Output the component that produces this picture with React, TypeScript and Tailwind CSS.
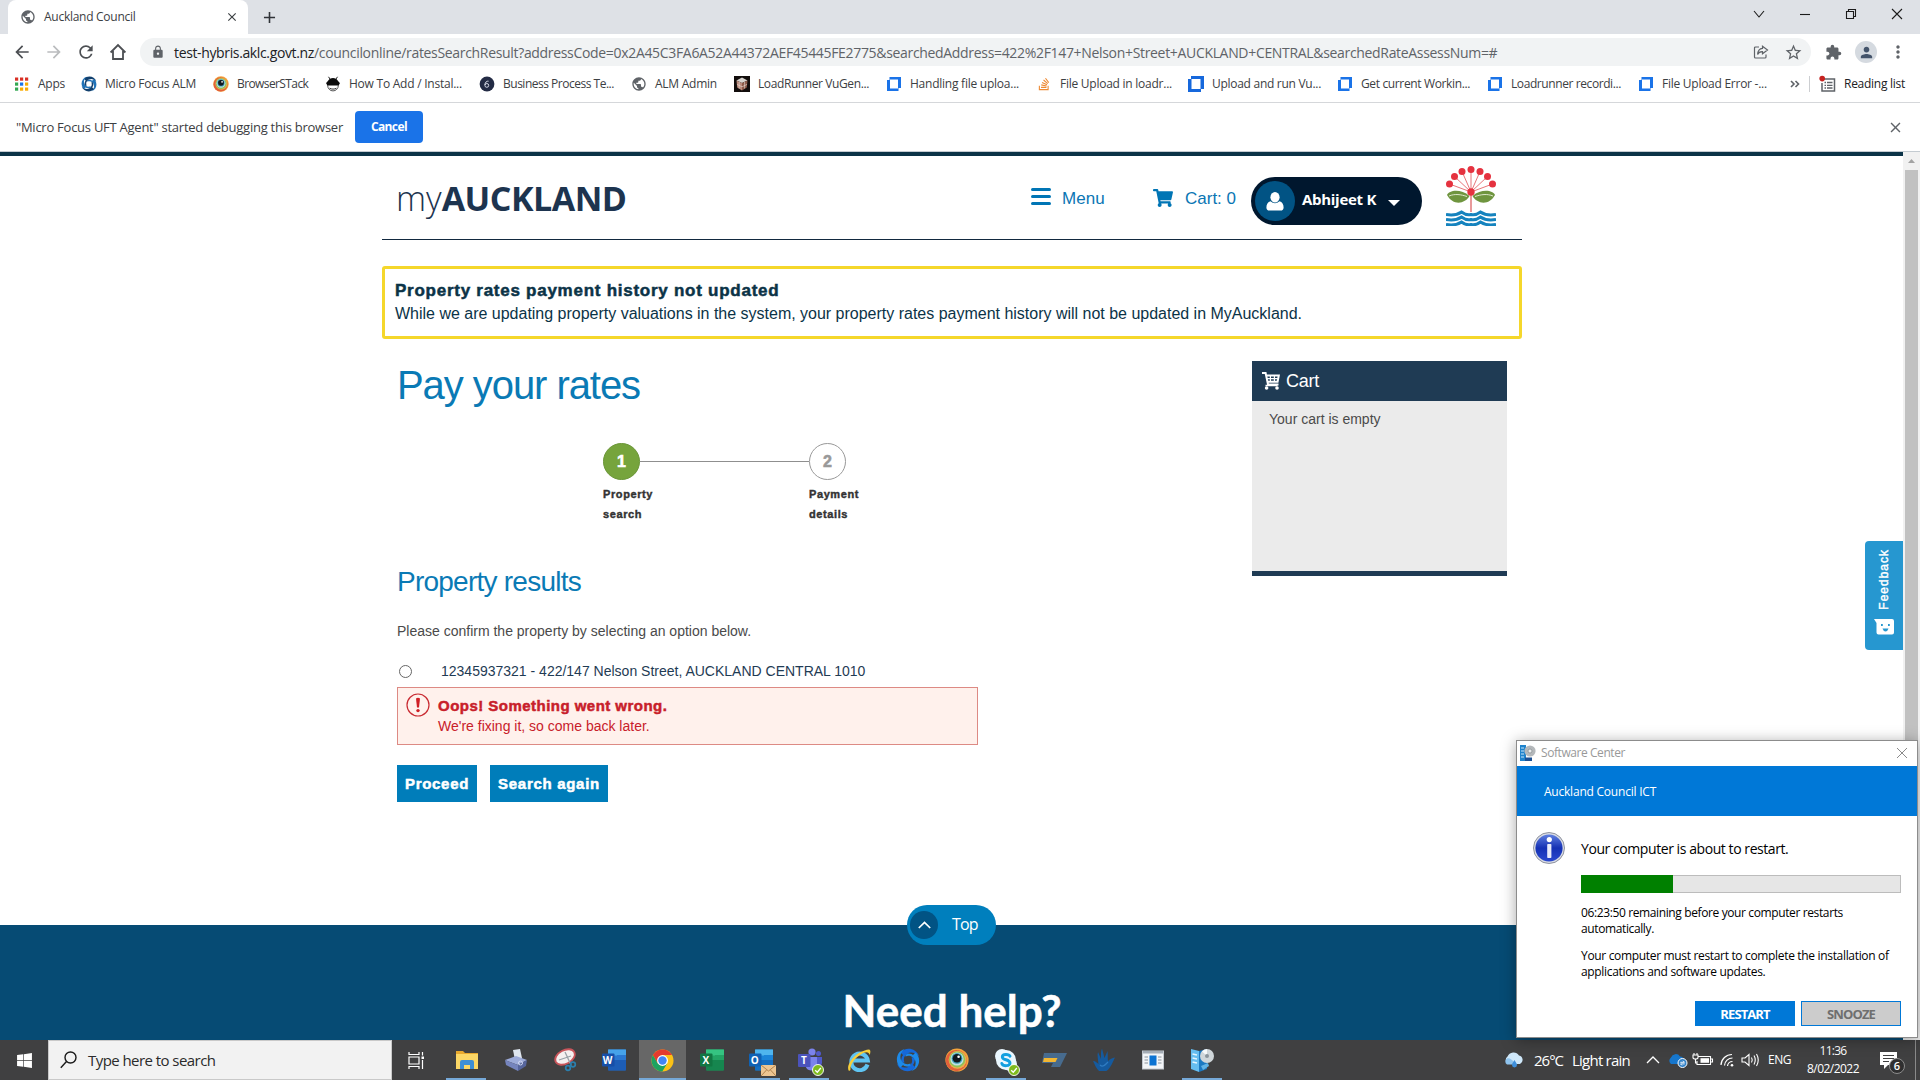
import type { ReactNode } from "react";
import {
  MdAdd,
  MdArrowBack,
  MdArrowForward,
  MdClose,
  MdExtension,
  MdLock,
  MdMoreVert,
  MdPerson,
  MdPublic,
  MdRefresh,
  MdStarBorder,
} from "react-icons/md";
import { FaShoppingCart, FaStackOverflow, FaWindows } from "react-icons/fa";

const SEGOE = "font-['Open_Sans',sans-serif]";
const ARIAL = "font-['Liberation_Sans',Arial,sans-serif]";

/* ---------- bookmark icons ---------- */

function AppsIcon() {
  const colors = ["#d93025", "#d93025", "#d93025", "#34a853", "#1a73e8", "#f9ab00", "#34a853", "#f9ab00", "#f9ab00"];
  return (
    <svg width="16" height="16" viewBox="0 0 16 16">
      {colors.map((c, i) => (
        <rect key={i} x={1 + (i % 3) * 5} y={1.5 + Math.floor(i / 3) * 5} width="3.2" height="3.2" fill={c} />
      ))}
    </svg>
  );
}

function Swirl({ size, color, inner }: { size: number; color: string; inner: string }) {
  return (
    <svg width={size} height={size} viewBox="0 0 24 24">
      {[0, 90, 180, 270].map((a, i) => (
        <g key={a} transform={`rotate(${a} 12 12)`}>
          <path d="M4.500 4.500C9.500 -1.500 20.500 0 23 8.500C19 3.200 11.500 3 8 8Z" fill={i % 2 ? inner : color} />
          <path d="M9.500 6.500C14.500 3.500 20 7.500 19 13.500C18 9.500 14.500 6.500 9.500 8.500Z" fill={i % 2 ? color : inner} />
        </g>
      ))}
    </svg>
  );
}

function BrowserStackIcon({ size }: { size: number }) {
  return (
    <svg width={size} height={size} viewBox="0 0 24 24">
      <circle cx="12" cy="12" r="11.6" fill="#f4a43c" />
      <circle cx="11.4" cy="12.6" r="10.6" fill="#e2603a" />
      <circle cx="12.6" cy="11.8" r="9" fill="#e9b04c" />
      <circle cx="12.2" cy="11.4" r="8" fill="#8fc25a" />
      <circle cx="12" cy="11" r="6.6" fill="#bfe0e4" />
      <circle cx="12" cy="10.4" r="5.4" fill="#3c9db8" />
      <circle cx="12" cy="10.2" r="4.3" fill="#10181f" />
      <circle cx="13.6" cy="8.8" r="1.3" fill="#fff" />
    </svg>
  );
}

function BugIcon() {
  return (
    <svg width="16" height="16" viewBox="0 0 16 16">
      <path d="M5 3L3.5 0.8M11 3L12.5 0.8" stroke="#222" strokeWidth="1" />
      <circle cx="8" cy="9.6" r="5.3" fill="#fff" stroke="#444" strokeWidth="0.9" />
      <path d="M1 7C3 6 3.4 2 8 2S13 6 15 7L13.6 9.6H2.4Z" fill="#0b0b0b" />
      <path d="M4.6 12.2C6.4 13.4 9.6 13.4 11.4 12.2" stroke="#333" fill="none" />
    </svg>
  );
}

function ProcessIcon() {
  return (
    <svg width="16" height="16" viewBox="0 0 16 16">
      <circle cx="8" cy="8" r="7.4" fill="#232b45" />
      <circle cx="7.8" cy="9.4" r="1.9" fill="none" stroke="#e4e8f4" strokeWidth="0.9" />
      <path d="M5.9 9C6 6.400 7.600 4.800 9.600 5.200" fill="none" stroke="#e4e8f4" strokeWidth="0.9" />
    </svg>
  );
}

function LoadRunnerIcon() {
  return (
    <svg width="16" height="16" viewBox="0 0 16 16">
      <rect width="16" height="16" fill="#120d0c" />
      <path d="M2.5 4.4L8 1.6L13.5 4.4L8 7Z" fill="#d7d3ce" />
      <path d="M2.5 4.4L8 7V14.6L3.2 11.6Z" fill="#b9897a" />
      <path d="M13.5 4.4L8 7V14.6L12.8 11.6Z" fill="#8d5a49" />
      <path d="M5.2 6V12.6M10.6 6V12.6M3 8.4L8 10.8L13 8.4" stroke="#eadfd8" strokeWidth="0.6" fill="none" />
    </svg>
  );
}

function CommunityIcon({ bold = false }: { bold?: boolean }) {
  return (
    <svg width="16" height="16" viewBox="0 0 16 16">
      {bold ? (
        <path d="M3 0H16V13H13V16H0V3H3ZM3.500 3V13H12.500V3Z" fill="#1668dc" fillRule="evenodd" />
      ) : (
        <path d="M3.500 1H15V12H12.500V15H1V4H3.500ZM4 3.500V12.500H12V3.500Z" fill="#1a73e8" fillRule="evenodd" />
      )}
    </svg>
  );
}

type Bookmark = { label: string; icon: ReactNode; width: string; tracking: string };

const bookmarks: Bookmark[] = [
  { label: "Apps", icon: <AppsIcon />, width: "w-[67px]", tracking: "tracking-[-0.25px]" },
  { label: "Micro Focus ALM", icon: <Swirl size={16} color="#12406e" inner="#1f72b8" />, width: "w-[132px]", tracking: "tracking-[-0.25px]" },
  { label: "BrowserSTack", icon: <BrowserStackIcon size={16} />, width: "w-[112px]", tracking: "tracking-[-0.6px]" },
  { label: "How To Add / Instal...", icon: <BugIcon />, width: "w-[154px]", tracking: "tracking-[-0.24px]" },
  { label: "Business Process Te...", icon: <ProcessIcon />, width: "w-[152px]", tracking: "tracking-[-0.49px]" },
  { label: "ALM Admin", icon: <MdPublic size={16} color="#5f6368" />, width: "w-[103px]", tracking: "tracking-[-0.25px]" },
  { label: "LoadRunner VuGen...", icon: <LoadRunnerIcon />, width: "w-[152px]", tracking: "tracking-[-0.4px]" },
  { label: "Handling file uploa...", icon: <CommunityIcon />, width: "w-[150px]", tracking: "tracking-[-0.24px]" },
  { label: "File Upload in loadr...", icon: <FaStackOverflow size={14} color="#ee8a34" className="mx-[1px]" />, width: "w-[152px]", tracking: "tracking-[-0.25px]" },
  { label: "Upload and run Vu...", icon: <CommunityIcon bold />, width: "w-[149px]", tracking: "tracking-[-0.28px]" },
  { label: "Get current Workin...", icon: <CommunityIcon />, width: "w-[150px]", tracking: "tracking-[-0.36px]" },
  { label: "Loadrunner recordi...", icon: <CommunityIcon />, width: "w-[151px]", tracking: "tracking-[-0.41px]" },
  { label: "File Upload Error -...", icon: <CommunityIcon />, width: "w-[145px]", tracking: "tracking-[-0.26px]" },
];

/* ---------- browser chrome ---------- */

function TabStrip() {
  return (
    <div className="flex h-[34px] shrink-0 bg-[#dee1e6] pl-2">
      <div className="relative flex h-[34px] w-[240px] items-center rounded-t-lg bg-white pl-3 pr-[9px]">
        <MdPublic size={16} color="#5f6368" />
        <span className="ml-2 grow text-[12px] tracking-[-0.27px] text-[#3c4043]">Auckland Council</span>
        <MdClose size={14} color="#3c4043" />
      </div>
      <div className="flex w-[43px] items-center justify-center">
        <MdAdd size={19} color="#303338" />
      </div>
      <div className="grow" />
      <svg className="mt-[7px] h-[14px] w-[185px]" viewBox="0 0 185 14" fill="none" stroke="#1b1b1b" strokeWidth="1.1">
        <path d="M19 4L24 10L29 4" />
        <path d="M65 7.5H75" />
        <path d="M111.500 4.500H118.500V11.500H111.500ZM113.500 4.500V2.500H120.500V9.500H118.500" />
        <path d="M157 2L167 12M167 2L157 12" />
      </svg>
    </div>
  );
}

function Toolbar() {
  return (
    <div className="flex h-[37px] shrink-0 items-center bg-white pb-px text-[#5f6368]">
      <div className="ml-3 flex w-[128px] items-center gap-3">
        <MdArrowBack size={20} color="#4c4f53" />
        <MdArrowForward size={20} color="#babcbe" />
        <MdRefresh size={20} color="#4c4f53" />
        <svg width="20" height="20" viewBox="0 0 20 20" fill="none" stroke="#4c4f53" strokeWidth="1.8">
          <path d="M2.600 10.500L10 3L17.400 10.500M5 9V17H15V9" />
        </svg>
      </div>
      <div className="flex h-7 w-[1671px] items-center rounded-full bg-[#f1f3f4] pl-[11px] pr-2">
        <MdLock size={14} className="shrink-0" />
        <div className="ml-[9px] grow whitespace-nowrap text-[14px] tracking-[-0.323px]">
          <span className="tracking-[-0.362px] text-[#202124]">test-hybris.aklc.govt.nz</span>
          /councilonline/ratesSearchResult?addressCode=0x2A45C3FA6A52A44372AEF45445FE2775&amp;searchedAddress=422%2F147+Nelson+Street+AUCKLAND+CENTRAL&amp;searchedRateAssessNum=#
        </div>
        <svg width="16" height="16" viewBox="0 0 16 16" fill="none" stroke="#5f6368" strokeWidth="1.200" className="mr-[15px]">
          <path d="M6 3H2.500Q1.500 3 1.500 4V13Q1.500 14 2.500 14H12Q13 14 13 13V10.500" />
          <path d="M9.500 2.200L14.500 6L9.500 9.800V7.600C7 7.500 5.400 8.600 4.600 10.600C4.800 7 6.600 4.700 9.500 4.400Z" />
        </svg>
        <MdStarBorder size={19} className="shrink-0" />
      </div>
      <MdExtension size={17} className="ml-[14px]" />
      <div className="ml-[13px] flex size-[22px] items-center justify-center rounded-full bg-[#d5dae0]">
        <MdPerson size={17} color="#44546b" />
      </div>
      <MdMoreVert size={20} className="ml-[11px]" />
    </div>
  );
}

function BookmarksBar() {
  return (
    <div className="flex h-8 shrink-0 items-center border-b border-[#d5d7da] bg-white pb-[5px] pl-[14px] text-[12px] text-[#3c4043]">
      {bookmarks.map((b) => (
        <div key={b.label} className={`flex shrink-0 items-center gap-2 whitespace-nowrap ${b.width}`}>
          {b.icon}
          <span className={b.tracking}>{b.label}</span>
        </div>
      ))}
      <svg width="10" height="8" viewBox="0 0 10 8" fill="none" stroke="#5f6368" strokeWidth="1.600" className="ml-[7px]">
        <path d="M1 1L4 4L1 7M5.500 1L8.500 4L5.500 7" />
      </svg>
      <div className="ml-[9px] h-4 w-px bg-[#ccced1]" />
      <svg width="17" height="18" viewBox="0 0 17 18" fill="none" className="ml-[9px]">
        <path d="M4 4H15.500V16H3V8" stroke="#5f6368" strokeWidth="1.500" />
        <path d="M5.500 7.500H7M8 7.500H13.500M5.500 10.300H7M8 10.300H13.500M5.500 13H7M8 13H13.500" stroke="#5f6368" strokeWidth="1.300" />
        <circle cx="3.200" cy="3.600" r="2.800" fill="#c5221f" />
      </svg>
      <span className="ml-2 whitespace-nowrap tracking-[-0.27px] text-[#202124]">Reading list</span>
    </div>
  );
}

function InfoBar() {
  return (
    <div className="flex h-[49px] shrink-0 items-center border-b border-[#c4cbd1] bg-white pl-4 pr-4">
      <span className="mt-px whitespace-nowrap text-[13px] tracking-[-0.255px] text-[#3c4043]">
        "Micro Focus UFT Agent" started debugging this browser
      </span>
      <button className="ml-3 h-8 w-[68px] rounded bg-[#1a73e8] text-[12px] font-bold tracking-[-0.6px] text-white">
        Cancel
      </button>
      <MdClose size={17} color="#5f6368" className="ml-auto" />
    </div>
  );
}

/* ---------- web page ---------- */

function CouncilLogo() {
  const dots: [number, number][] = [
    [3.500, 18], [8.500, 10.500], [16, 5.500], [25, 3.500], [34, 5.500], [41.500, 10.500], [46.500, 18],
  ];
  return (
    <svg width="50" height="60" viewBox="0 0 50 60" className="ml-6 mt-[10px]">
      <g stroke="#e4656a" strokeWidth="0.900">
        {dots.map(([x, y]) => (
          <line key={x} x1="25" y1="26" x2={x} y2={y} />
        ))}
      </g>
      {dots.map(([x, y]) => (
        <circle key={x} cx={x} cy={y} r="3.500" fill="#e5323f" />
      ))}
      <path d="M25 26V46" stroke="#e99a9b" strokeWidth="2" />
      <circle cx="25" cy="26" r="3.700" fill="#e5323f" />
      <path d="M1 29C3 24 15 22.500 23.500 30C19 38 7 40 1 29Z" fill="#6f953f" />
      <path d="M49 29C47 24 35 22.500 26.500 30C31 38 43 40 49 29Z" fill="#6f953f" />
      <path d="M3 30C9 27.500 15 28.500 21 30.500M47 30C41 27.500 35 28.500 29 30.500" stroke="#e9f0da" strokeWidth="0.900" fill="none" />
      {[48.5, 53.5, 58.5].map((y) => (
        <path
          key={y}
          d={`M0 ${y}C6 ${y + 1} 12 ${y} 15.500 ${y - 2.5}C19 ${y} 22 ${y + 1} 25 ${y}C28 ${y + 1} 31 ${y} 34.500 ${y - 2.5}C38 ${y} 44 ${y + 1} 50 ${y}`}
          fill="none"
          stroke="#1583be"
          strokeWidth="3"
        />
      ))}
    </svg>
  );
}

function PageHeader() {
  return (
    <header className="flex h-[84px] w-[1140px] items-start border-b border-[#12293f] pl-[14px]">
      <div className={`mt-[22px] w-[635px] whitespace-nowrap text-[34px] leading-10 text-[#1d344f] ${SEGOE}`}>
        <span className="font-light">my</span>
        <span className="font-bold tracking-[-0.5px]">AUCKLAND</span>
      </div>
      <div className="mt-8 flex h-5 w-[122px] text-[17px] leading-[21px] tracking-[0.1px] text-[#0a76b4]">
        <div className="mr-[11px] flex h-[17px] w-5 flex-col justify-between">
          <span className="h-[3px] rounded-full bg-[#0075b5]" />
          <span className="h-[3px] rounded-full bg-[#0075b5]" />
          <span className="h-[3px] rounded-full bg-[#0075b5]" />
        </div>
        Menu
      </div>
      <div className="mt-8 flex h-5 w-[98px] text-[17px] leading-[21px] text-[#0a76b4]">
        <FaShoppingCart size={20} color="#0075b5" className="mr-3" />
        Cart: 0
      </div>
      <div className={`mt-[21px] flex h-12 w-[171px] items-center rounded-full bg-[#00172e] pl-1 text-white ${SEGOE}`}>
        <div className="flex size-10 shrink-0 items-center justify-center rounded-full bg-[#015384]">
          <svg width="18" height="19" viewBox="0 0 18 19" fill="#fff">
            <ellipse cx="9" cy="5.300" rx="4.600" ry="5.200" />
            <path d="M4.500 9.300Q9 13 13.500 9.300Q17.600 10.500 17.600 15.500Q17.600 18.600 14.500 18.600H3.500Q0.400 18.600 0.400 15.500Q0.400 10.500 4.500 9.300Z" />
          </svg>
        </div>
        <span className="-mt-[3px] ml-[7px] whitespace-nowrap text-[15px] font-bold tracking-[-0.29px]">Abhijeet K</span>
        <svg width="12" height="6" viewBox="0 0 12 6" className="ml-3 mt-1">
          <path d="M0 0H12L6 6Z" fill="#fff" />
        </svg>
      </div>
      <CouncilLogo />
    </header>
  );
}

function Steps() {
  return (
    <div className="ml-[206px] mt-[35px]">
      <div className="flex items-center text-[16px] font-bold">
        <span className="flex size-[37px] items-center justify-center rounded-full border border-[#6b9638] bg-[#76a43c] pt-px text-white [-webkit-text-stroke:0.6px]">
          1
        </span>
        <span className="h-px w-[169px] bg-[#8f8f8f]" />
        <span className="flex size-[37px] items-center justify-center rounded-full border border-[#999] pt-px text-[#999] [-webkit-text-stroke:0.6px]">
          2
        </span>
      </div>
      <div className="mt-1 flex text-[11px] font-bold leading-5 text-[#333] [-webkit-text-stroke:0.4px]">
        <div className="w-[206px] tracking-[0.6px]">
          Property
          <br />
          search
        </div>
        <div className="tracking-[0.6px]">
          Payment
          <br />
          details
        </div>
      </div>
    </div>
  );
}

function CartPanel() {
  return (
    <aside className="h-[215px] w-[255px] border-b-[5px] border-[#1f3b54] bg-[#ebebeb]">
      <div className="flex h-10 items-center bg-[#1f3b54] pl-[10px] text-[18px] tracking-[-0.25px] text-white">
        <svg width="18" height="18" viewBox="0 0 18 18" fill="none" stroke="#fff" strokeWidth="1.500" className="mr-[6px]">
          <path d="M0 1H3.600L6 12.500H16.500M4.200 3.500H16.800L15.600 9.800H5.600" strokeWidth="2" />
          <path d="M4.800 6.600H16M8.400 3.500V9.800M12.400 3.500V9.800" strokeWidth="1.200" />
          <circle cx="4.600" cy="16" r="1.800" fill="#fff" stroke="none" />
          <circle cx="15" cy="16" r="1.800" fill="#fff" stroke="none" />
          <path d="M3.500 13.500H15.500" />
        </svg>
        Cart
      </div>
      <p className="pl-[17px] pt-2 text-[14px] leading-5 text-[#4a4a4a]">Your cart is empty</p>
    </aside>
  );
}

function MainContent() {
  return (
    <div className="ml-[15px] mt-[22px] flex">
      <main className="w-[855px] shrink-0">
        <h1 className="pt-px text-[40px] leading-[46px] tracking-[-1.060px] text-[#0a7ab5]">Pay your rates</h1>
        <Steps />
        <h2 className="mt-[42px] text-[28px] leading-8 tracking-[-0.760px] text-[#0a7ab5]">Property results</h2>
        <p className="mt-[23px] text-[14px] leading-5 text-[#4a4a4a]">
          Please confirm the property by selecting an option below.
        </p>
        <label className="mt-5 flex h-5 text-[14px] leading-5 text-[#1f3b54]">
          <span className="ml-[2px] mr-[29px] mt-1 size-[13px] rounded-full border border-[#666] bg-white" />
          12345937321 - 422/147 Nelson Street, AUCKLAND CENTRAL 1010
        </label>
        <div className="mt-[6px] flex h-[58px] w-[581px] border border-[#dd8a84] bg-[#fff1ec] pl-2 pt-2 text-[14px] leading-5 text-[#c8202a]">
          <svg width="24" height="24" viewBox="0 0 24 24" className="-mt-[3px] mr-2">
            <circle cx="12" cy="12" r="11" fill="none" stroke="#c92a31" strokeWidth="1.200" />
            <path d="M10 5.500Q12 4 14 5.500L13 14.500H11Z" fill="#d01f26" />
            <circle cx="12" cy="17.600" r="1.700" fill="#d01f26" />
          </svg>
          <div>
            <p className="text-[15px] font-bold tracking-[0.470px] [-webkit-text-stroke:0.5px]">Oops! Something went wrong.</p>
            <p>We're fixing it, so come back later.</p>
          </div>
        </div>
        <div className="mt-5 flex gap-[13px] text-[15px] font-bold tracking-[0.70px] text-white [-webkit-text-stroke:0.5px]">
          <button className="h-[37px] w-20 bg-[#007dba] pt-[2px]">Proceed</button>
          <button className="h-[37px] w-[118px] bg-[#007dba] pt-[2px]">Search again</button>
        </div>
      </main>
      <CartPanel />
    </div>
  );
}

function FeedbackTab() {
  return (
    <div className="absolute right-0 top-[385px] flex h-[109px] w-[38px] flex-col items-center justify-end rounded-l bg-[#2697d0] pb-[15px] text-white">
      <span className="mb-[9px] rotate-180 text-[12px] leading-4 tracking-[1px] [-webkit-text-stroke:0.4px] [writing-mode:vertical-rl]">
        Feedback
      </span>
      <svg width="20" height="16" viewBox="0 0 20 16">
        <path d="M0 0H18Q20 0 20 2V13.500Q20 15.500 18 15.500H4.500Q2.500 15.500 2.500 13.500V4Z" fill="#fff" />
        <rect x="7" y="5" width="1.800" height="2" fill="#2697d0" />
        <rect x="14" y="5" width="1.800" height="2" fill="#2697d0" />
        <path d="M8.500 9.500H14.500Q13.500 12.500 11.500 12.500T8.500 9.500Z" fill="#2697d0" />
      </svg>
    </div>
  );
}

function Footer() {
  return (
    <footer className="relative flex h-[115px] w-full flex-col items-center bg-[#064b74] text-white">
      <div className={`absolute -top-5 left-[907px] flex h-10 w-[89px] items-center rounded-full bg-[#007fbd] pl-[3px] text-[16px] ${SEGOE}`}>
        <span className="flex size-7 items-center justify-center rounded-full bg-[#015384]">
          <svg width="13" height="8" viewBox="0 0 13 8" fill="none" stroke="#fff" strokeWidth="1.700">
            <path d="M0.800 7L6.500 1.400L12.200 7" />
          </svg>
        </span>
        <span className="-mt-[2px] ml-[14px] tracking-[-0.9px]">Top</span>
      </div>
      <h2 className="ml-px mt-[61px] whitespace-nowrap font-['Lato',sans-serif] text-[44px] font-bold leading-[48px] [-webkit-text-stroke:0.5px]">
        Need help?
      </h2>
    </footer>
  );
}

function WebPage() {
  return (
    <div className={`flex h-[888px] shrink-0 ${ARIAL}`}>
      <div className="relative flex h-full w-[1903px] flex-col overflow-hidden border-t-4 border-[#0b3347] bg-white">
        <div className="ml-[382px] w-[1140px] grow">
          <PageHeader />
          <section className="mt-[26px] h-[73px] rounded-[3px] border-[3px] border-[#f5d72b] pl-[10px] pt-[10px] text-[#0b3347]">
            <h3 className="text-[17px] font-bold leading-[23px] tracking-[0.74px] [-webkit-text-stroke:0.5px]">
              Property rates payment history not updated
            </h3>
            <p className="whitespace-nowrap text-[16px] leading-[23px] tracking-[-0.008px]">
              While we are updating property valuations in the system, your property rates payment history will not be
              updated in MyAuckland.
            </p>
          </section>
          <MainContent />
        </div>
        <Footer />
        <FeedbackTab />
      </div>
      <div className="flex w-[17px] flex-col items-center bg-[#f1f1f1]">
        <svg width="17" height="18" viewBox="0 0 17 18">
          <path d="M5 11L8.500 7L12 11Z" fill="#a3a3a3" />
        </svg>
        <div className="h-[600px] w-[13px] bg-[#c1c1c1]" />
      </div>
    </div>
  );
}

/* ---------- restart dialog ---------- */

function RestartDialog() {
  return (
    <div className="absolute left-[1516px] top-[740px] flex h-[298px] w-[402px] flex-col border border-[#8c8c8c] bg-white text-black shadow-[0_2px_14px_rgba(0,0,0,0.350)]">
      <div className="flex h-[25px] shrink-0 items-center pb-px pl-[3px] pr-[9px] text-[12px] text-[#999]">
        <svg width="16" height="16" viewBox="0 0 16 16">
          <rect x="0" y="0" width="6" height="16" fill="#1f83cc" />
          <path d="M1 3H4M1 6H4M1 9H4M1 12H4" stroke="#c9e6fa" />
          <circle cx="10" cy="6" r="5.600" fill="#b4b8bb" />
          <circle cx="10" cy="6" r="2" fill="#e9ecee" stroke="#84898d" strokeWidth="0.700" />
          <rect x="5" y="12.500" width="7" height="3.500" fill="#1b4f93" />
        </svg>
        <span className="ml-[5px] grow tracking-[-0.430px]">Software Center</span>
        <svg width="12" height="12" viewBox="0 0 12 12" stroke="#8a8a8a" strokeWidth="1">
          <path d="M1 1L11 11M11 1L1 11" />
        </svg>
      </div>
      <div className="flex h-[50px] shrink-0 items-center bg-[#0078d7] pl-[27px] pt-px text-[12px] tracking-[-0.220px] text-white">
        Auckland Council ICT
      </div>
      <div className="flex pl-4 pt-4">
        <svg width="32" height="32" viewBox="0 0 32 32">
          <defs>
            <linearGradient id="info" x1="0" y1="0" x2="0" y2="1">
              <stop offset="0" stopColor="#5f7fe0" />
              <stop offset="0.500" stopColor="#1531b4" />
              <stop offset="1" stopColor="#2a49cf" />
            </linearGradient>
          </defs>
          <circle cx="16" cy="16" r="15.500" fill="#d9dce4" stroke="#777c8c" strokeWidth="0.800" />
          <circle cx="16" cy="16" r="13.600" fill="url(#info)" />
          <circle cx="16.300" cy="7.600" r="2.600" fill="#fff" />
          <rect x="14.200" y="12" width="4.200" height="14" rx="0.800" fill="#e9ecfa" />
        </svg>
        <div className="ml-4 w-80 whitespace-nowrap text-[12px] leading-4">
          <p className="pt-[7px] text-[14px] leading-5 tracking-[-0.430px]">Your computer is about to restart.</p>
          <div className="mt-4 h-[18px] border border-[#bcbcbc] bg-[#e6e6e6]">
            <div className="-ml-px -mt-px h-[18px] w-[92px] bg-[#008000]" />
          </div>
          <p className="mt-3 tracking-[-0.380px]">
            06:23:50 remaining before your computer restarts
            <br />
            automatically.
          </p>
          <p className="mt-[11px] tracking-[-0.330px]">
            Your computer must restart to complete the installation of
            <br />
            applications and software updates.
          </p>
          <div className="mt-[21px] flex justify-end gap-[6px] text-[13px] font-bold tracking-[-0.9px]">
            <button className="h-[25px] w-[100px] bg-[#0078d7] text-white">RESTART</button>
            <button className="h-[25px] w-[100px] border border-[#0078d7] bg-[#cccccc] text-[#6f6f6f]">SNOOZE</button>
          </div>
        </div>
      </div>
    </div>
  );
}

/* ---------- taskbar ---------- */

function ExplorerIcon() {
  return (
    <svg width="24" height="24" viewBox="0 0 24 24">
      <path d="M1 3H8L10 5H23V21H1Z" fill="#e8a92e" />
      <path d="M1 6H23V21H1Z" fill="#fbd766" />
      <path d="M5 21V14Q5 12 7 12H17Q19 12 19 14V21H15V17H9V21Z" fill="#3e8fd6" />
    </svg>
  );
}

function PrinterIcon() {
  return (
    <svg width="24" height="24" viewBox="0 0 24 24">
      <path d="M9 2L16 1L18 10L11 12Z" fill="#dfe6ef" />
      <path d="M1 12L12 8L23 12L14 17Z" fill="#9dabd9" />
      <path d="M1 12L14 17V23L2 17Z" fill="#7584bd" />
      <path d="M23 12L14 17V23L22 18Z" fill="#56659c" />
      <circle cx="16.500" cy="15" r="2" fill="none" stroke="#cfd7f2" />
    </svg>
  );
}

function SnipIcon() {
  return (
    <svg width="24" height="24" viewBox="0 0 24 24">
      <ellipse cx="12" cy="9" rx="10.500" ry="6.800" transform="rotate(-28 12 9)" fill="#f5f0f0" stroke="#c9555b" strokeWidth="1.800" />
      <path d="M12 4L18 17M6 12L18 8" stroke="#9aa2a8" strokeWidth="1.300" />
      <circle cx="15" cy="20" r="2.300" fill="none" stroke="#2b7fae" strokeWidth="1.700" />
      <circle cx="20" cy="16.500" r="2.300" fill="none" stroke="#2b7fae" strokeWidth="1.700" />
    </svg>
  );
}

function OfficeIcon({ letter, dark, mid, light }: { letter: string; dark: string; mid: string; light: string }) {
  return (
    <span className="relative flex h-6 w-6 items-center">
      <svg width="24" height="24" viewBox="0 0 24 24">
        <rect x="6" y="1.500" width="18" height="21" rx="1" fill={mid} />
        <rect x="6" y="1.500" width="18" height="6" fill={light} />
        <rect x="15" y="7" width="9" height="5.500" fill={mid} />
        <rect x="6" y="12" width="18" height="10.500" fill={dark} opacity="0.650" />
        <rect x="0" y="5.500" width="12.500" height="13" rx="1" fill={dark} />
      </svg>
      <span className="absolute left-0 top-[5px] w-3 text-center text-[10px] font-bold leading-[14px] text-white">{letter}</span>
    </span>
  );
}

function StatusBadge() {
  return (
    <svg width="12" height="12" viewBox="0 0 12 12" className="absolute -bottom-1 -right-[2px]">
      <circle cx="6" cy="6" r="5.500" fill="#7fba1e" stroke="#fff" strokeWidth="0.900" />
      <path d="M3.200 6.200L5.300 8.200L8.800 4" stroke="#fff" strokeWidth="1.300" fill="none" />
    </svg>
  );
}

function OutlookIcon() {
  return (
    <span className="relative">
      <OfficeIcon letter="O" dark="#0f62b5" mid="#1b84d8" light="#4fb5ee" />
      <svg width="15" height="11" viewBox="0 0 15 11" className="absolute -bottom-1 -right-[3px]">
        <rect width="15" height="11" fill="#ecc592" />
        <path d="M0 0L7.500 6L15 0M0 11L5.500 5M15 11L9.500 5" stroke="#a87b46" strokeWidth="0.900" fill="none" />
      </svg>
    </span>
  );
}

function ChromeIcon() {
  return (
    <svg width="23" height="23" viewBox="0 0 24 24">
      <circle cx="12" cy="12" r="11.500" fill="#fbc116" />
      <path d="M2 6.300A11.500 11.500 0 0 1 22 6.300H12L7 14.800Z" fill="#e33b2e" />
      <path d="M2 6.300A11.500 11.500 0 0 0 11.800 23.500L17 14.800L7 14.800Z" fill="#1da261" />
      <circle cx="12" cy="12" r="5.700" fill="#fff" />
      <circle cx="12" cy="12" r="4.400" fill="#4285f4" />
    </svg>
  );
}

function TeamsIcon() {
  return (
    <span className="relative">
      <svg width="24" height="24" viewBox="0 0 24 24">
        <circle cx="14" cy="4" r="3.600" fill="#7b83eb" />
        <circle cx="20.500" cy="5.500" r="2.500" fill="#5059c9" />
        <path d="M16 9H24V15Q23 19 19 19Z" fill="#5059c9" />
        <path d="M7 9H19V16Q18 22.500 13 22.500T7 16Z" fill="#7b83eb" />
        <rect x="0" y="6" width="12.500" height="13" rx="1" fill="#4b53bc" />
      </svg>
      <span className="absolute left-0 top-[5px] w-3 text-center text-[10px] font-bold leading-[14px] text-white">T</span>
      <StatusBadge />
    </span>
  );
}

function ExplorerBrowserIcon() {
  return (
    <svg width="24" height="24" viewBox="0 0 24 24" fill="none">
      <path d="M20.500 16.500A8.300 8.300 0 1 1 20.800 12.500H6" stroke="#5fc4f2" strokeWidth="4" />
      <path d="M2 23C-2 18 8 3 22 1.500C24 2 23.500 5 22.500 7C22 4 19 3 13 7C7 11 3 17 3.500 22Z" fill="#f7cf3a" />
    </svg>
  );
}

function SkypeIcon() {
  return (
    <span className="relative">
      <svg width="24" height="24" viewBox="0 0 24 24">
        <circle cx="8" cy="8" r="7" fill="#eaf7fe" />
        <circle cx="16" cy="16" r="7" fill="#eaf7fe" />
        <circle cx="12" cy="12" r="10" fill="#eaf7fe" />
        <path d="M16 8.200C15 6 8.300 5.600 8.300 9C8.300 12.500 16 11 16 15C16 18.500 9 18.500 7.800 15.400" fill="none" stroke="#12a0e0" strokeWidth="2.900" strokeLinecap="round" />
      </svg>
      <StatusBadge />
    </span>
  );
}

function SlantIcon() {
  return (
    <svg width="26" height="24" viewBox="0 0 26 24">
      <path d="M2 5H25L18 19H9L11 15H0Z" fill="#476b8e" />
      <path d="M2 10H15.500L13.500 14H1Z" fill="#f2b632" />
    </svg>
  );
}

function HandIcon() {
  return (
    <svg width="24" height="24" viewBox="0 0 24 24">
      <path d="M7 23C4 20 3 17 1 13C4 13 5 15 6.500 16C6 11 5 7 6 4L9 11C9 7 8.600 3 10 0.500L12.500 10L15.500 3C16 7 15.500 10 16 13C18 11 20 10 23 9.500C21 13 19 20 14.500 23Z" fill="#155a9e" />
      <path d="M8 17C11 20 14 16 16 14" stroke="#2f7cc2" fill="none" strokeWidth="1.200" />
    </svg>
  );
}

function WindowIcon() {
  return (
    <svg width="22" height="20" viewBox="0 0 22 20">
      <rect x="0.500" y="1" width="21" height="18" fill="#f3f5f7" stroke="#c4c9cf" />
      <rect x="1" y="1" width="20" height="2.500" fill="#a5adb6" />
      <path d="M2.500 7H6M2.500 10H6M2.500 13H6M16 7H19.500M16 10H19.500M16 13H19.500" stroke="#8a939c" />
      <rect x="7.500" y="5.500" width="7" height="10" fill="#0c73d2" />
    </svg>
  );
}

function SoftwareCenterIcon() {
  return (
    <svg width="24" height="24" viewBox="0 0 24 24">
      <path d="M1 1L9 3V24L1 21Z" fill="#66bdf0" />
      <path d="M9 3L17 1V21L9 24Z" fill="#1b79c2" />
      <path d="M2.500 6L7 7M2.500 10L7 11M2.500 14L7 15" stroke="#e3f5ff" strokeWidth="1.300" />
      <circle cx="17" cy="8" r="7" fill="#cfd6da" />
      <path d="M17 8L12 3.500A7 7 0 0 1 17 1Z" fill="#f6f9fa" />
      <circle cx="17" cy="8" r="2" fill="#8b959c" />
      <path d="M11 18L18 15L19 18L13 22Z" fill="#62b3e6" />
    </svg>
  );
}

const apps: { name: string; icon: ReactNode; open?: boolean; active?: boolean }[] = [
  { name: "explorer", icon: <ExplorerIcon />, open: true },
  { name: "printer", icon: <PrinterIcon /> },
  { name: "snip", icon: <SnipIcon /> },
  { name: "word", icon: <OfficeIcon letter="W" dark="#174fa8" mid="#2a78d2" light="#46a3ea" /> },
  { name: "chrome", icon: <ChromeIcon />, open: true, active: true },
  { name: "excel", icon: <OfficeIcon letter="X" dark="#117743" mid="#22a464" light="#35c481" /> },
  { name: "outlook", icon: <OutlookIcon />, open: true },
  { name: "teams", icon: <TeamsIcon />, open: true },
  { name: "ie", icon: <ExplorerBrowserIcon /> },
  { name: "alm", icon: <Swirl size={24} color="#1668d8" inner="#1d8ae8" /> },
  { name: "browserstack", icon: <BrowserStackIcon size={24} /> },
  { name: "skype", icon: <SkypeIcon />, open: true },
  { name: "slant", icon: <SlantIcon /> },
  { name: "hand", icon: <HandIcon /> },
  { name: "window", icon: <WindowIcon /> },
  { name: "software", icon: <SoftwareCenterIcon />, open: true },
];

function Taskbar() {
  return (
    <div className="flex h-10 shrink-0 bg-[#404041] text-white">
      <div className="flex w-12 items-center justify-center">
        <FaWindows size={17} />
      </div>
      <div className="flex w-[344px] items-center border border-[#c9c9c9] bg-[#f2f2f2] pl-[11px] text-[15px] text-[#2b2b2b]">
        <svg width="17" height="18" viewBox="0 0 17 18" fill="none" stroke="#1a1a1a" strokeWidth="1.400">
          <circle cx="10.500" cy="6.500" r="5.500" />
          <path d="M6.500 10.500L0.800 16.800" />
        </svg>
        <span className="ml-[11px] tracking-[-0.560px]">Type here to search</span>
      </div>
      <div className="flex w-[49px] items-center justify-center">
        <svg width="17" height="17" viewBox="0 0 17 17" fill="none" stroke="#fff" strokeWidth="1.200">
          <path d="M1 0V2.500H11V0M1 17V14.500H11V17M1 5H11V12H1ZM14.500 0V3.500M14.500 8V17" />
          <rect x="13.500" y="4.500" width="2.500" height="2.500" fill="#fff" stroke="none" />
        </svg>
      </div>
      {apps.map((a) => (
        <div key={a.name} className="relative flex w-[49.050px] shrink-0 items-center justify-center">
          {a.active && <div className="absolute inset-y-0 left-[2px] w-[47px] bg-[#676767]" />}
          <div className="relative left-px flex">{a.icon}</div>
          {a.open && !a.active && <div className="absolute bottom-0 left-[5px] h-[2px] w-10 bg-[#76a9d8]" />}
          {a.active && <div className="absolute bottom-0 left-[2px] h-[2px] w-[47px] bg-[#76a9d8]" />}
        </div>
      ))}
      <div className="ml-auto flex w-[417px] items-center">
        <svg width="22" height="16" viewBox="0 0 22 16" className="mr-[9px]">
          <path d="M5 12A4.500 4.500 0 0 1 4.500 4.500A6.500 6.500 0 0 1 16 3.500A4.500 4.500 0 0 1 17 12Z" fill="#cfe8fa" />
          <path d="M4 12.500A3.500 3.500 0 0 1 4 6.500C8 5 10 10 14 12.500Z" fill="#8fc4ee" />
          <path d="M11.500 8C13 10.500 14 11.500 14 13A2.500 2.500 0 0 1 9 13C9 11.500 10.300 10 11.500 8Z" fill="#3e8fdb" />
        </svg>
        <span className="w-[38px] text-[15px] tracking-[-1px]">26°C</span>
        <span className="w-[72px] whitespace-nowrap text-[15px] tracking-[-0.770px]">Light rain</span>
        <svg width="118" height="18" viewBox="0 0 118 18" fill="none" stroke="#fff" strokeWidth="1.300">
          <path d="M3 12L9 6L15 12" />
          <path d="M27 13A4 4 0 0 1 27 6.500A5 5 0 0 1 36 5.500A4 4 0 0 1 40 9V13Z" fill="#1676cc" stroke="none" />
          <circle cx="38.500" cy="12" r="4.500" fill="#2f80c7" stroke="#fff" strokeWidth="1" />
          <path d="M36.300 11.300H40.500L39 9.800M40.700 12.900H36.500L38 14.400" strokeWidth="0.900" />
          <path d="M54 5.500H66.500V13.500H53V10M67 8H68.500V11H67M50 2V4M53 2V4M49 4H54V6.500Q54 8 51.500 8T49 6.500ZM51.500 8V12H53" strokeWidth="1.100" />
          <rect x="56.500" y="7.200" width="8.500" height="4.600" fill="#fff" stroke="none" />
          <path d="M77 14A11 11 0 0 1 88 3.500M80.500 14.500A8 8 0 0 1 88.500 7M83.500 15A5 5 0 0 1 88.500 10.500" strokeWidth="1.200" />
          <circle cx="88" cy="14.300" r="1.300" fill="#fff" stroke="none" />
          <path d="M98 7H101L105 3.500V14.500L101 11H98ZM107.500 6.500Q109 9 107.500 11.500M110 4.500Q112.500 9 110 13.500M112.500 3Q116 9 112.500 15" strokeWidth="1.100" />
        </svg>
        <span className="ml-[6px] w-[38px] text-[12px] tracking-[-0.480px]">ENG</span>
        <div className="w-[54px] text-center text-[12px] leading-[18px]">
          <p className="tracking-[-0.720px]">11:36</p>
          <p className="tracking-[-0.540px]">8/02/2022</p>
        </div>
        <div className="relative ml-[20px]">
          <svg width="18" height="17" viewBox="0 0 18 17">
            <path d="M0 0H17V13H8L4 17V13H0Z" fill="#fff" />
            <path d="M3 3.500H14M3 6.500H14M3 9.500H9" stroke="#404041" strokeWidth="1.200" />
          </svg>
          <span className="absolute left-[9px] top-[6px] flex size-4 items-center justify-center rounded-full border border-[#8d8d8d] bg-[#2f2f30] text-[11px] font-semibold leading-none">
            6
          </span>
        </div>
        <div className="ml-auto mr-1 h-10 w-px bg-[#8a8a8a]" />
      </div>
    </div>
  );
}

export default function App() {
  return (
    <div className={`relative flex h-[1080px] w-[1920px] flex-col overflow-hidden bg-white ${SEGOE}`}>
      <TabStrip />
      <Toolbar />
      <BookmarksBar />
      <InfoBar />
      <WebPage />
      <Taskbar />
      <RestartDialog />
    </div>
  );
}
